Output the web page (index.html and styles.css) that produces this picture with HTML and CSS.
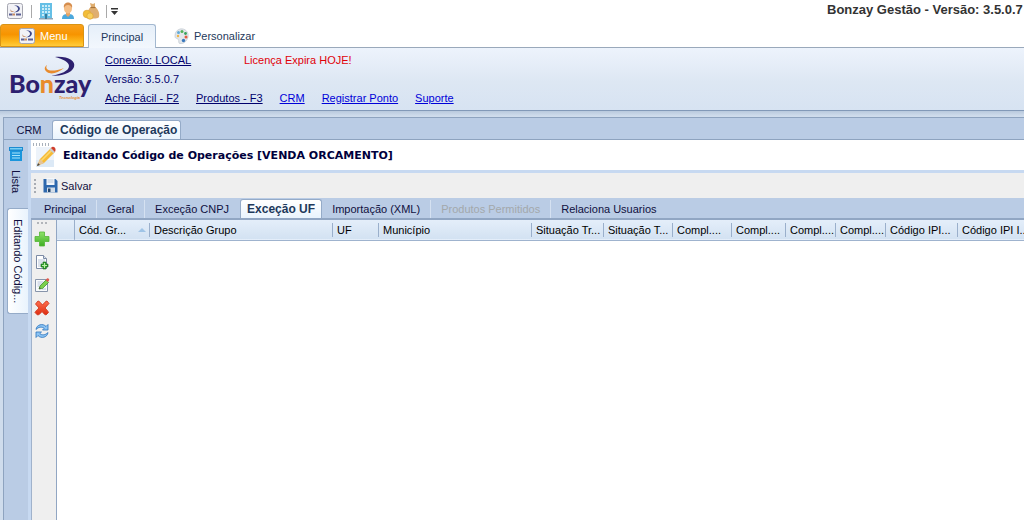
FILE: index.html
```html
<!DOCTYPE html>
<html lang="pt-BR">
<head>
<meta charset="utf-8">
<title>Bonzay Gestão</title>
<link rel="stylesheet" href="styles.css">
</head>
<body>
<svg class="defs" aria-hidden="true">
  <defs>
    <linearGradient id="green" x1="0" y1="0" x2="0" y2="1"><stop offset="0" stop-color="#8fe36a"/><stop offset="1" stop-color="#3fae22"/></linearGradient>
    <linearGradient id="red" x1="0" y1="0" x2="0" y2="1"><stop offset="0" stop-color="#ff7050"/><stop offset="1" stop-color="#dc2c10"/></linearGradient>
    <symbol id="mini" viewBox="0 0 16 16">
      <rect x=".5" y=".5" width="15" height="15" rx="2" fill="#f2f2f6" stroke="#a5a6b0"/>
      <path d="M7 2.500c4-.5 7 1.500 5.500 4.500-1 1.800-3.500 2.500-6 2.500 3-.8 4.800-2 4.500-3.900C10.800 3.800 9.500 3 7 2.500z" fill="#3b4487"/>
      <path d="M4 6c-.5 2.300 2 2.600 4 1.800-2 2-6 1.400-4-1.800z" fill="#c58b62"/>
      <path d="M2 11.500h3.500M9 11.500h5" stroke="#5a5f93" stroke-width="2"/>
      <path d="M5.500 11.500H8" stroke="#c58b62" stroke-width="2"/>
    </symbol>
  </defs>
</svg>
<header class="titlebar">
  <div class="quick">
    <button class="qbtn" aria-label="Bonzay"><svg width="16" height="16"><use href="#mini"/></svg></button>
    <span class="qsep"></span>
    <button class="qbtn" aria-label="Empresas"><svg width="16" height="18" viewBox="0 0 16 18"><path d="M2 1h12v16H2z" fill="#65bfe6"/><path d="M1 16h14v1.500H1z" fill="#91a4b4"/><path d="M4 3h2v2H4zM7 3h2v2H7zM10 3h2v2h-2zM4 6h2v2H4zM7 6h2v2H7zM10 6h2v2h-2zM4 9h2v2H4zM7 9h2v2H7zM10 9h2v2h-2zM4 12h2v2H4zM10 12h2v2h-2z" fill="#c9ecf8"/><path d="M7 12h2v5H7z" fill="#397b9b"/></svg></button>
    <button class="qbtn" aria-label="Clientes"><svg width="16" height="18" viewBox="0 0 16 18"><path d="M2 17c0-4 2-5 6-5s6 1 6 5z" fill="#4ca8dc"/><path d="M6 9h4v4l-2 2-2-2z" fill="#e5a467"/><ellipse cx="8" cy="6.500" rx="4" ry="5" fill="#f5be86"/><path d="M4 6C3 2 6 .5 8 .5S13 2 12 6c-1-2-2-3-4-3S5 4 4 6z" fill="#d58c4c"/></svg></button>
    <button class="qbtn" aria-label="Financeiro"><svg width="18" height="18" viewBox="0 0 18 18"><path d="M8 1l3 1 2-1v4c3 2 5 6 4 10-1 2-10 2-11 0C5 11 6 7 9 5z" fill="#dfae70"/><path d="M8.500 5.500h5" stroke="#a87339" stroke-width="1.200"/><circle cx="5" cy="12" r="3.800" fill="#f3be37" stroke="#e0a736" stroke-width=".8"/><circle cx="8" cy="14" r="3.200" fill="#f8cf5c" stroke="#e0a736" stroke-width=".8"/></svg></button>
    <span class="qsep"></span>
    <button class="qbtn qmore" aria-label="Mais"><svg width="7" height="7"><path d="M0 0h7v1.500H0zM0 3h7L3.500 7z" fill="#333"/></svg></button>
  </div>
  <h1 class="apptitle">Bonzay Gestão - Versão: 3.5.0.7</h1>
</header>
<nav class="ribbontabs">
  <button class="menu"><svg width="16" height="16"><use href="#mini"/></svg>Menu</button>
  <button class="rtab rtab-on">Principal</button>
  <button class="rtab"><svg width="16" height="16" viewBox="0 0 16 16"><path d="M6 1c5-1 9 3 8 8-1 4-4 7-8 6.500-2 0-.5-2.500-2-4.500-1-1-3 0-3-3 0-4 2-6 5-7z" fill="#e3e7eb" stroke="#c6cdd4" stroke-width=".8"/><circle cx="4.500" cy="4.500" r="1.500" fill="#60aad8"/><circle cx="8" cy="3.500" r="1.500" fill="#54b259"/><circle cx="11.500" cy="5.500" r="1.400" fill="#38a05b"/><circle cx="12" cy="9" r="1.500" fill="#e35a3f"/><circle cx="9.500" cy="12.500" r="1.700" fill="#3978bd"/><circle cx="4" cy="8" r="1.200" fill="#eeb445"/></svg>Personalizar</button>
</nav>
<section class="ribbon">
  <svg class="logo" width="84" height="46" viewBox="0 0 84 46" role="img" aria-label="Bonzay Tecnologia">
    <path d="M46 1c13-1 21 4 19 10-2 6-12 9-23 9 10-2 18-5 18-10 0-4-6-7-14-9z" fill="#2d206f"/>
    <path d="M38 9c-3 5 4 8 17 3-6 5-13 7-17 4-3-2-3-5 0-7z" fill="#e88b2c"/>
    <text x="0" y="37" class="logo-text">Bo<tspan class="logo-n">n</tspan>zay</text>
    <text x="50" y="43" class="logo-sub">Tecnologia</text>
  </svg>
  <div class="info">
    <div class="row"><a class="navy conn" href="#">Conexão: LOCAL</a><span class="warn">Licença Expira HOJE!</span></div>
    <div class="row navy">Versão: 3.5.0.7</div>
    <div class="row links"><a class="navy" href="#">Ache Fácil - F2</a><a class="navy" href="#">Produtos - F3</a><a href="#">CRM</a><a href="#">Registrar Ponto</a><a href="#">Suporte</a></div>
  </div>
</section>
<main class="shell">
  <nav class="doctabs"><button class="dtab">CRM</button><button class="dtab dtab-on">Código de Operação</button></nav>
  <div class="work">
    <aside class="side">
      <button class="stab"><svg width="14" height="16" viewBox="0 0 14 16"><path d="M0 1h14v4H0z" fill="#1d8bd0"/><path d="M1 2h12v1.500H1z" fill="#7bd0f5"/><path d="M1 5h12v10H1z" fill="#1b96dc"/><path d="M3 7h8M3 9.500h8M3 12h8" stroke="#a5e3fb" stroke-width="1.200"/></svg><span>Lista</span></button>
      <button class="stab stab-on"><span>Editando Códig...</span></button>
    </aside>
    <div class="doc">
      <div class="heading">
        <svg width="21" height="23" viewBox="0 0 21 23"><path d="M1 2h18v20H1z" fill="#edf3fa"/><path d="M1 15h18v7H1z" fill="#dce9f6"/><path d="M2 21l3-7 11-11 4 4L9 18z" fill="#f6ba35"/><path d="M6 16L17 5" stroke="#fbd971" stroke-width="1.600"/><path d="M2 21l3-7 4 4z" fill="#e4c49a"/><path d="M2 21l1-3 2 2z" fill="#454545"/><path d="M14.500 4.500l4 4 1.500-1.500-4-4z" fill="#c7ccd2"/><path d="M16 3c2-3 6 0 4 4z" fill="#cf3e2d"/></svg>
        <h2>Editando Código de Operações [VENDA ORCAMENTO]</h2>
      </div>
      <div class="toolbar"><span class="grip"></span><button class="save"><svg width="15" height="15" viewBox="0 0 15 15"><path d="M.5 1h12L14.500 3v11.500H.5z" fill="#2e68ad"/><path d="M3.500 0h8v7h-8z" fill="#f4f7fb"/><path d="M4.500 2h6M4.500 4h6" stroke="#b9c8db"/><path d="M4 9.500h8v5H4z" fill="#d3dde8"/><path d="M5 10.500h2.500v3.500H5z" fill="#24466f"/></svg>Salvar</button></div>
      <nav class="pagetabs">
        <button class="ptab">Principal</button><button class="ptab">Geral</button><button class="ptab ptab-last">Exceção CNPJ</button><button class="ptab ptab-on">Exceção UF</button><button class="ptab">Importação (XML)</button><button class="ptab" disabled>Produtos Permitidos</button><button class="ptab ptab-last">Relaciona Usuarios</button>
      </nav>
      <div class="panel">
        <div class="tools">
          <span class="dots"></span>
          <button aria-label="Adicionar"><svg width="16" height="16" viewBox="0 0 16 16"><path d="M5.500 1h5v4.500H15v5h-4.500V15h-5v-4.500H1v-5h4.500z" fill="url(#green)" stroke="#55b537" stroke-width=".8"/></svg></button>
          <button aria-label="Copiar"><svg width="16" height="16" viewBox="0 0 16 16"><path d="M2.500 1.500h7l3 3v10h-10z" fill="#fff" stroke="#7d8ba5"/><path d="M9.500 1.500v3h3" fill="#dbe3ef" stroke="#7d8ba5"/><path d="M4 6h7M4 8h7M4 10h4M4 12h3" stroke="#b8c4d8"/><path d="M9 8h3v2h2v3h-2v2H9v-2H7v-3h2z" fill="#2e9a2a" stroke="#176f1b" stroke-width=".6"/><path d="M10.500 9v5M8 11.500h5" stroke="#b8f0a4" stroke-width="1.200"/></svg></button>
          <button aria-label="Editar"><svg width="16" height="16" viewBox="0 0 16 16"><path d="M1.500 2.500h12v12h-12z" fill="#f8fafc" stroke="#8794aa"/><path d="M3.500 5h6M3.500 7h5M3.500 9h3M8 12h4" stroke="#b8c4d8"/><path d="M5 12l1-3 6-6 2.500 2.500-6 6z" fill="#7bcf4c" stroke="#43962c" stroke-width=".8"/><path d="M11.500 3l1.500-1.500c1-1 3 1 2 2L14 5z" fill="#df594d"/><path d="M5 12l.5-2 1.500 1.500z" fill="#494949"/></svg></button>
          <button aria-label="Excluir"><svg width="16" height="16" viewBox="0 0 16 16"><path d="M4 1c1 0 3 2 4.500 4C10 3 12 1 13 1l2 2.500L11 8c1.500 1.500 3 3 3.500 4.500L12 15c-1.500-.5-3-2-4-3.500C7 13 5 15 3.500 15L1 12.500C1.500 11 3.500 9.500 5 8L1.500 4z" fill="url(#red)" stroke="#d03c22" stroke-width=".9"/></svg></button>
          <button aria-label="Atualizar"><svg width="16" height="16" viewBox="0 0 16 16"><path d="M2 6.500C2.500 1.500 9 0 12 3.500l2-2v5.500H8.500l1.700-1.700C8 3.500 4.500 3.800 2 6.500z" fill="#8cc4f4" stroke="#2c74bd" stroke-width=".8"/><path d="M14 9.500c-.5 5-7 6.500-10 3l-2 2V9h5.500l-1.700 1.700c2.200 1.800 5.700 1.500 8.200-1.200z" fill="#8cc4f4" stroke="#2c74bd" stroke-width=".8"/></svg></button>
        </div>
        <div class="gridwrap">
          <table class="grid">
            <colgroup><col class="c18"><col class="c75"><col class="c183"><col class="c46"><col class="c153"><col class="c72"><col class="c69"><col class="c59"><col class="c54"><col class="c50"><col class="c50"><col class="c72"><col class="c72"></colgroup>
            <thead><tr><th></th><th class="sorted">Cód. Gr...<svg width="8" height="4"><path d="M0 4l4-4 4 4z" fill="#9fc4e6"/></svg></th><th>Descrição Grupo</th><th>UF</th><th>Município</th><th>Situação Tr...</th><th>Situação T...</th><th>Compl....</th><th>Compl....</th><th>Compl....</th><th>Compl....</th><th>Código IPI...</th><th>Código IPI I...</th></tr></thead>
          </table>
        </div>
      </div>
    </div>
  </div>
</main>
</body>
</html>
```
FILE: styles.css
```css
* { box-sizing: border-box; }
html { height: 100%; overflow: hidden; }
body {
  margin: 0;
  height: 100vh;
  display: flex;
  flex-direction: column;
  overflow: hidden;
  background: #fff;
  color: #101040;
  font: 11px/16px "Liberation Sans", Arial, sans-serif;
  white-space: nowrap;
}
button {
  margin: 0;
  padding: 0;
  border: 0;
  background: none;
  color: inherit;
  font: inherit;
  flex: none;
}
svg { display: block; flex: none; }
.defs { position: absolute; width: 0; height: 0; }

.titlebar { display: flex; height: 24px; flex: none; }
.quick { display: flex; align-items: center; padding: 0 0 2px 7px; flex: 1; }
.qbtn { margin-right: 6px; }
.qsep { width: 1px; height: 13px; margin: 0 6px 0 2px; background: #a9a9a9; }
.qsep:nth-last-child(2) { margin: 0 4px 0 0; }
.qmore { margin: 0; }
.apptitle {
  margin: 0;
  width: 197px;
  flex: none;
  overflow: hidden;
  color: #333;
  font: bold 13px/20px "Liberation Sans", Arial, sans-serif;
}

.ribbontabs { display: flex; height: 24px; flex: none; border-bottom: 1px solid #9aa9bb; color: #1e395b; }
.menu {
  display: flex;
  align-items: center;
  gap: 5px;
  width: 84px;
  height: 23px;
  padding-left: 18px;
  border: 1px solid #d99414;
  border-radius: 3px 3px 0 0;
  background: linear-gradient(#f9a01b, #f79400 45%, #fdb91e 80%, #ffcb3c);
  color: #fff;
}
.rtab { display: flex; align-items: center; gap: 4px; height: 24px; padding: 0 18px; }
.rtab-on {
  width: 68px;
  margin-left: 4px;
  padding: 0;
  justify-content: center;
  border: 1px solid #a3b8d0;
  border-bottom: 0;
  border-radius: 3px 3px 0 0;
  background: linear-gradient(#e6eff9, #f2f7fd);
}

.ribbon {
  display: flex;
  flex: none;
  height: 63px;
  padding: 8px 0 0 9px;
  border-bottom: 1px solid #8299b8;
  background: linear-gradient(#edf3fc, #dde7f3 55%, #d7e3f2);
}
.logo { margin-right: 12px; }
.logo-text { font: 900 25px "Lato", sans-serif; fill: #2d206f; }
.logo-n { fill: #e88b2c; }
.logo-sub { font: italic bold 4px "Liberation Sans", sans-serif; fill: #e88b2c; }
.info { display: flex; flex-direction: column; margin-top: -5px; }
.row { display: flex; height: 19px; line-height: 19px; }
.row a { color: #0000d8; }
.row a.navy, .navy { color: #00006c; }
.conn { width: 139px; }
.warn { color: #e00008; }
.links { gap: 17px; }

.shell {
  display: flex;
  flex-direction: column;
  flex: 1;
  min-height: 0;
  padding: 6px 0 0 3px;
  background: linear-gradient(#b9c9dd, #cfdcec 5px);
}
.doctabs {
  display: flex;
  align-items: flex-end;
  flex: none;
  height: 23px;
  border: solid #8ea3bf;
  border-width: 1px 0 1px 1px;
  background: #bacce5;
}
.dtab { width: 48px; height: 19px; padding-left: 2px; }
.dtab-on {
  width: auto;
  padding: 0 3px 0 7px;
  border: 1px solid #95abc8;
  border-bottom: 0;
  border-radius: 3px 3px 0 0;
  background: linear-gradient(#fff, #e9f3fd);
  color: #1e395b;
  font-weight: bold;
  font-size: 12px;
}
.work { display: flex; flex: 1; min-height: 0; border-left: 1px solid #8ea3bf; }
.side { display: flex; flex-direction: column; width: 24px; flex: none; background: #bacce5; }
.stab { display: flex; flex-direction: column; align-items: center; gap: 8px; width: 21px; height: 68px; margin-left: 3px; padding: 6px 0 0; }
.stab:first-child { padding-right: 3px; }
.stab span { writing-mode: vertical-rl; line-height: 16px; }
.stab-on {
  height: 106px;
  padding-top: 10px;
  border: 1px solid #95abc8;
  border-right: 0;
  border-radius: 3px 0 0 3px;
  background: linear-gradient(90deg, #fff, #e9f3fd);
}
.doc { display: flex; flex-direction: column; flex: 1; min-width: 0; border-left: 3px solid #c7d9f1; }
.heading { position: relative; display: flex; gap: 7px; height: 33px; padding: 5px 0 0 4px; border-bottom: 3px solid #c7d9f1; background: #fff; flex: none; }
.heading::before {
  content: "";
  position: absolute;
  left: 2px;
  top: 3px;
  width: 17px;
  height: 3px;
  background: repeating-linear-gradient(90deg, #a9b1bb 0 1px, transparent 1px 3px);
}
.heading h2 { margin: 0; color: #00003c; font: bold 11px/22px "DejaVu Sans", Verdana, sans-serif; }
.toolbar { display: flex; align-items: center; height: 25px; padding-left: 3px; gap: 7px; background: #efefef; flex: none; }
.grip { width: 2px; height: 14px; background: repeating-linear-gradient(#a8acb3 0 2px, transparent 2px 4px); }
.save { display: flex; align-items: center; gap: 3px; }
.pagetabs {
  display: flex;
  align-items: flex-end;
  height: 22px;
  flex: none;
  border-bottom: 2px solid #91a6c3;
  background: #bacce5;
}
.ptab { height: 18px; padding: 0 10px; border-right: 1px solid #d5e1f1; }
.ptab:first-child { padding-left: 13px; }
.ptab-last { border-right-color: transparent; }
.ptab-on {
  height: 19px;
  padding: 0 6px;
  border: 1px solid #95abc8;
  border-bottom: 0;
  border-radius: 3px 3px 0 0;
  background: linear-gradient(#fff, #e9f3fd);
  color: #1e395b;
  font-size: 12px;
  font-weight: bold;
}
.ptab:disabled { color: #a3a8ab; }
.panel { display: flex; flex: 1; min-height: 0; border-left: 1px solid #a0b2cb; }
.tools { display: flex; flex-direction: column; align-items: center; gap: 7px; width: 25px; padding: 2px 4px 0 0; flex: none; border-right: 1px solid #91a6c3; background: #efefef; }
.dots { width: 11px; height: 2px; background: repeating-linear-gradient(90deg, #b2b5ba 0 2px, transparent 2px 4px); }
.gridwrap { flex: 1; min-width: 0; overflow: hidden; background: #fff; }
.grid { width: 973px; table-layout: fixed; border-collapse: collapse; }
.c18 { width: 18px; } .c75 { width: 75px; } .c183 { width: 183px; } .c46 { width: 46px; }
.c153 { width: 153px; } .c72 { width: 72px; } .c69 { width: 69px; } .c59 { width: 59px; }
.c54 { width: 54px; } .c50 { width: 50px; }
.grid thead { background: linear-gradient(#e4eefa, #d3e2f2); border-bottom: 1px solid #9fb3ce; }
.grid th {
  height: 20px;
  padding: 1px 0 0 4px;
  background: linear-gradient(#9aafcb, #9aafcb) right center / 1px 14px no-repeat;
  color: #000;
  font-weight: normal;
  line-height: 18px;
  text-align: left;
}
.grid th:first-child { background-size: 1px 100%; }
.sorted svg { display: inline-block; margin: 0 0 2px 12px; }
```
